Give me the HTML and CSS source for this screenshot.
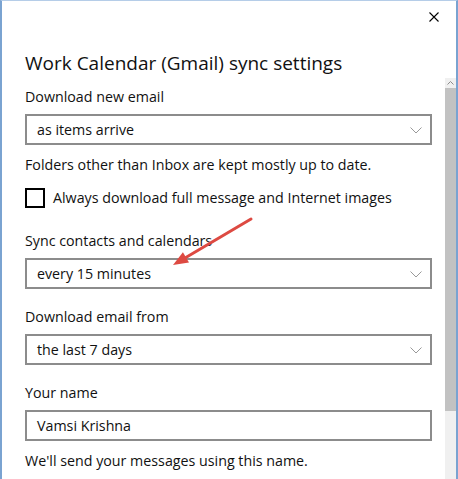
FILE: index.html
```html
<!DOCTYPE html>
<html lang="en">
<head>
    <meta charset="UTF-8">
    <meta name="viewport" content="width=device-width, initial-scale=1.0">
    <title>Sync settings</title>
    <link rel="stylesheet" href="styles.css">
</head>
<body>
    <div class="window">
        <!-- title bar with close -->
        <div class="header">
            <div class="close-row">
                <button class="close-btn" aria-label="Close">
                    <svg width="10" height="10" viewBox="0 0 10 10">
                        <path d="M0.5 0.5 L9.5 9.5 M9.5 0.5 L0.5 9.5" stroke="#000" stroke-width="1.1" fill="none"/>
                    </svg>
                </button>
            </div>
            <h1 class="title">Work Calendar (Gmail) sync settings</h1>
        </div>

        <div class="body-row">
            <div class="content">
                <div class="label first">Download new email</div>
                <div class="select">
                    <span>as items arrive</span>
                    <svg class="chev" width="12" height="7" viewBox="0 0 12 7"><path d="M0.5 0.5 L6 6 L11.5 0.5" stroke="#999" stroke-width="1" fill="none"/></svg>
                </div>
                <div class="note">Folders other than Inbox are kept mostly up to date.</div>
                <label class="check-row">
                    <span class="checkbox"></span>
                    <span>Always download full message and Internet images</span>
                </label>

                <div class="label gap-lg">Sync contacts and calendars</div>
                <div class="select">
                    <span>every 15 minutes</span>
                    <svg class="chev" width="12" height="7" viewBox="0 0 12 7"><path d="M0.5 0.5 L6 6 L11.5 0.5" stroke="#999" stroke-width="1" fill="none"/></svg>
                </div>

                <div class="label gap">Download email from</div>
                <div class="select">
                    <span>the last 7 days</span>
                    <svg class="chev" width="12" height="7" viewBox="0 0 12 7"><path d="M0.5 0.5 L6 6 L11.5 0.5" stroke="#999" stroke-width="1" fill="none"/></svg>
                </div>

                <div class="label gap">Your name</div>
                <div class="select text-input">Vamsi Krishna</div>
                <div class="note">We'll send your messages using this name.</div>
            </div>

            <!-- scrollbar -->
            <div class="scrollbar">
                <div class="scroll-up">
                    <svg width="7" height="4" viewBox="0 0 7 4"><path d="M0.5 3.5 L3.5 0.5 L6.5 3.5" stroke="#8c8c8c" stroke-width="1" fill="none"/></svg>
                </div>
                <div class="thumb"></div>
                <div class="track"></div>
            </div>
        </div>

        <!-- red pointer arrow -->
        <svg class="pointer" width="458" height="479" viewBox="0 0 458 479">
            <line x1="251" y1="219" x2="185" y2="258" stroke="#dd4a42" stroke-width="3" stroke-linecap="round"/>
            <polygon points="173,265 189,262.6 182.9,252.2" fill="#dd4a42"/>
        </svg>
    </div>
</body>
</html>
```

FILE: styles.css
```css
* { box-sizing: border-box; }

body {
    margin: 0;
    background: #fff;
    font-family: "Open Sans", "Noto Sans", Arial, sans-serif;
    color: #111;
}

.window {
    position: relative;
    width: 458px;
    height: 479px;
    overflow: hidden;
    background: #fff;
    border-left: 2px solid #7aa3d1;
    border-right: 2px solid #7aa3d1;
    border-top: 1px solid #b5cde8;
}

.header {
    height: 77px;
}
.close-row {
    height: 31px;
    display: flex;
    justify-content: flex-end;
}
.close-btn {
    width: 32px;
    height: 31px;
    border: none;
    background: none;
    padding: 0;
    margin-right: 6px;
    display: flex;
    align-items: center;
    justify-content: center;
}
.title {
    margin: 18px 0 0 23px;
    font-size: 19px;
    font-weight: 400;
    line-height: 26px;
    color: #111;
}

.body-row {
    display: flex;
    height: 401px;
}
.content {
    flex: 1;
    padding: 0 13px 0 23px;
    font-size: 14.25px;
    line-height: 20px;
}

.label.first { margin-top: 9px; }
.label.gap { margin-top: 18px; }
.label.gap-lg { margin-top: 23px; }

.select {
    margin-top: 7px;
    height: 31px;
    border: 2px solid #8c8c8c;
    display: flex;
    align-items: center;
    justify-content: space-between;
    padding: 0 8px 0 10px;
}
.chev { margin-top: 1px; }

.note { margin-top: 10px; }

.check-row {
    margin-top: 13px;
    display: flex;
    align-items: center;
    gap: 8px;
}
.checkbox {
    width: 20px;
    height: 20px;
    border: 2px solid #000;
}

.scrollbar {
    width: 11px;
    display: flex;
    flex-direction: column;
    background: #f0f0f0;
}
.scroll-up {
    height: 10px;
    display: flex;
    align-items: center;
    justify-content: center;
}
.thumb {
    height: 323px;
    background: #c2c2c2;
}
.track { flex: 1; }

.pointer {
    position: absolute;
    left: -2px;
    top: -1px;
    pointer-events: none;
}
```
